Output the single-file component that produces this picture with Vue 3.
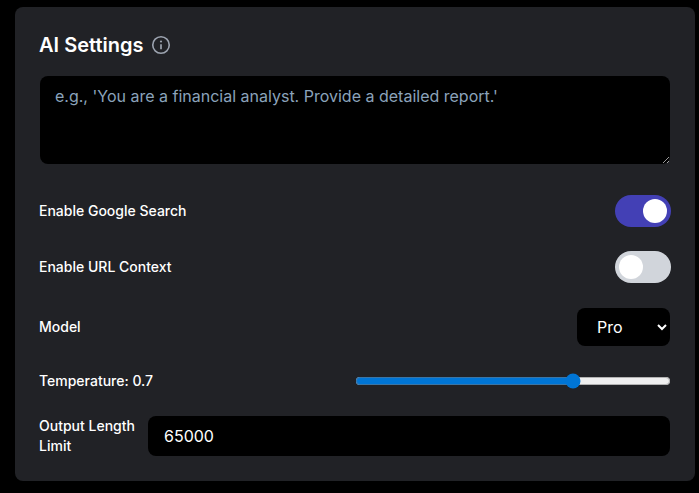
<template>
  <div class="settings-card">
    <div class="card-title">
      <h2>AI Settings</h2>
      <svg class="info-icon" width="20" height="20" viewBox="0 0 20 20" fill="none">
        <circle cx="10" cy="10" r="8.25" stroke="#9ca3af" stroke-width="1.6" />
        <circle cx="10" cy="6.5" r="1.1" fill="#9ca3af" />
        <path d="M10 9.2V14.2" stroke="#9ca3af" stroke-width="1.7" />
      </svg>
    </div>

    <textarea
      class="prompt"
      placeholder="e.g., 'You are a financial analyst. Provide a detailed report.'"
    ></textarea>

    <div class="toggle-row">
      <span class="label">Enable Google Search</span>
      <div class="toggle" :class="{ on: googleSearch }" @click="googleSearch = !googleSearch">
        <div class="knob"></div>
      </div>
    </div>

    <div class="toggle-row second">
      <span class="label">Enable URL Context</span>
      <div class="toggle" :class="{ on: urlContext }" @click="urlContext = !urlContext">
        <div class="knob"></div>
      </div>
    </div>

    <div class="model-row">
      <span class="label">Model</span>
      <select v-model="model" class="model-select">
        <option>Pro</option>
        <option>Flash</option>
      </select>
    </div>

    <div class="temp-row">
      <span class="label">Temperature: {{ temperature }}</span>
      <input v-model="temperature" class="temp-range" type="range" min="0" max="1" step="0.1" />
    </div>

    <div class="limit-row">
      <span class="label limit-label">Output Length Limit</span>
      <input v-model="limit" class="limit-input" type="text" />
    </div>
  </div>
</template>

<script setup>
import { ref } from 'vue'

const googleSearch = ref(true)
const urlContext = ref(false)
const model = ref('Pro')
const temperature = ref(0.7)
const limit = ref('65000')
</script>

<style>
html,
body {
  background: #000;
}
</style>

<style scoped>
.settings-card {
  box-sizing: border-box;
  width: 680px;
  height: 474px;
  margin: 7px 0 0 15px;
  padding: 24px;
  background: #212226;
  border-radius: 8px;
  font-family: Inter, "Liberation Sans", sans-serif;
  color: #fff;
}

.card-title {
  display: flex;
  align-items: center;
  gap: 8px;
  height: 28px;
  margin-bottom: 17px;
}

.card-title h2 {
  margin: 0;
  font-size: 20px;
  line-height: 28px;
  font-weight: 600;
}

.prompt {
  display: block;
  box-sizing: border-box;
  width: 630px;
  height: 88px;
  margin-left: 1px;
  padding: 8px 15px;
  background: #000;
  border: 0;
  border-radius: 8px;
  outline: 0;
  color: #fff;
  font-family: inherit;
  font-size: 16px;
  line-height: 24px;
}

.prompt::placeholder {
  color: #8ba3bb;
  opacity: 1;
}

.label {
  font-size: 14px;
  line-height: 20px;
  font-weight: 500;
}

.toggle-row {
  display: flex;
  align-items: center;
  justify-content: space-between;
  margin-top: 31px;
}

.toggle-row.second {
  margin-top: 24px;
}

.toggle {
  display: flex;
  align-items: center;
  box-sizing: border-box;
  width: 56px;
  height: 32px;
  padding: 0 4px;
  background: #d1d5db;
  border-radius: 16px;
  cursor: pointer;
}

.toggle.on {
  justify-content: flex-end;
  background: #4340b5;
}

.knob {
  width: 24px;
  height: 24px;
  background: #fff;
  border-radius: 50%;
}

.model-row {
  display: flex;
  align-items: center;
  justify-content: space-between;
  margin-top: 25px;
}

.model-select {
  box-sizing: border-box;
  width: 93px;
  height: 38px;
  margin-right: 1px;
  padding: 0 16px;
  background: #000;
  border: 0;
  border-radius: 8px;
  outline: 0;
  color: #fff;
  font-family: inherit;
  font-size: 16px;
}

.temp-row {
  display: flex;
  align-items: center;
  justify-content: space-between;
  margin-top: 24px;
  height: 22px;
}

.temp-range {
  width: 316px;
  margin: 0 0 0 auto;
  accent-color: #0075d5;
}

.limit-row {
  display: flex;
  align-items: center;
  gap: 13px;
  margin-top: 24px;
}

.limit-label {
  width: 96px;
  flex-shrink: 0;
}

.limit-input {
  box-sizing: border-box;
  width: 522px;
  height: 40px;
  padding: 0 16px;
  background: #000;
  border: 0;
  border-radius: 8px;
  outline: 0;
  color: #fff;
  font-family: inherit;
  font-size: 16px;
}
</style>
